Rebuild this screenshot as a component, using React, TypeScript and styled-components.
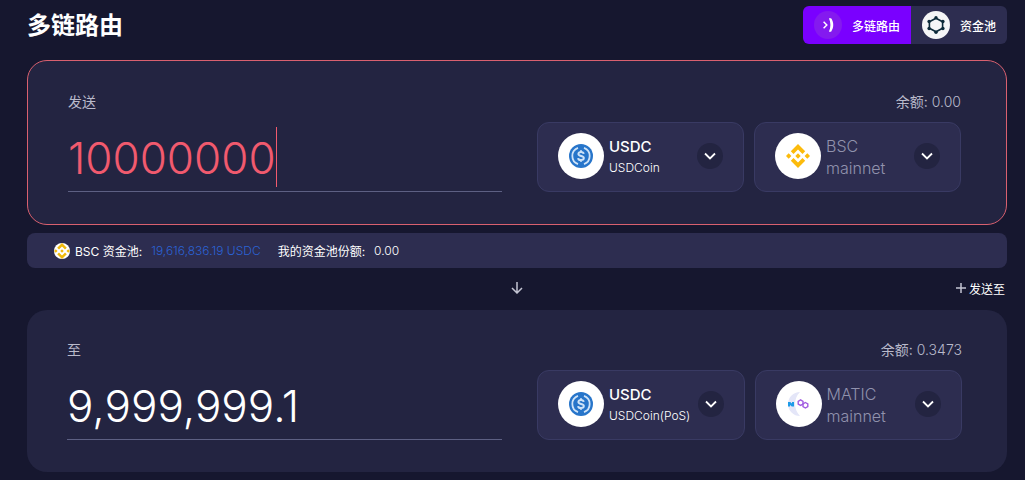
import React, { useState } from 'react';
import styled, { createGlobalStyle } from 'styled-components';

const GlobalStyle = createGlobalStyle`
  *, *::before, *::after { box-sizing: border-box; }
  body {
    margin: 0;
    background: #16172f;
    color: #fff;
    font-family: Inter, 'Noto Sans CJK SC', sans-serif;
  }
  button, input { font-family: inherit; color: inherit; }
  button { border: 0; padding: 0; margin: 0; background: none; cursor: pointer; }
`;

const Page = styled.main`
  padding: 6px 18px 8px 27px;
`;

const Header = styled.header`
  display: flex;
  align-items: center;
  justify-content: space-between;
  height: 38px;
  margin-bottom: 16px;
`;

const Title = styled.h1`
  margin: 0;
  padding-top: 2px;
  font-size: 24px;
  line-height: 38px;
  font-weight: 600;
`;

const Tabs = styled.nav`
  display: flex;
  border-radius: 6px;
  overflow: hidden;
`;

const Tab = styled.button<{ $active?: boolean }>`
  display: flex;
  align-items: center;
  gap: 10px;
  height: 38px;
  padding: 0 11px;
  font-size: 12px;
  font-weight: 500;
  background: ${(p) => (p.$active ? '#7a00ff' : '#2d2d50')};
`;

const Card = styled.section<{ $invalid?: boolean }>`
  padding: ${(p) => (p.$invalid ? 31 : 30)}px 45px 32px 40px;
  border: ${(p) => (p.$invalid ? '1px solid #d9606f' : '0')};
  border-radius: 20px;
  background: #232441;
`;

const CardHead = styled.div`
  display: flex;
  justify-content: space-between;
  margin-bottom: 10px;
  font-size: 14px;
  line-height: 20px;
  color: #b9bacb;
`;

const BalanceValue = styled.span`
  font-weight: 300;
`;

const CardBody = styled.div`
  display: grid;
  grid-template-columns: 434fr 424fr;
  gap: 35px;
`;

const AmountLine = styled.div`
  display: flex;
  align-items: center;
  height: 70px;
  border-bottom: 1px solid #5d6083;
`;

const Amount = styled.input<{ $invalid?: boolean }>`
  field-sizing: content;
  min-width: 10px;
  max-width: 100%;
  height: 60px;
  padding: 3px 0 0;
  border: 0;
  outline: 0;
  background: none;
  caret-color: transparent;
  font-size: 44px;
  font-weight: 300;
  color: ${(p) => (p.$invalid ? '#f15a6e' : '#fff')};
`;

const Caret = styled.span`
  width: 1px;
  height: 60px;
  background: #f15a6e;
`;

const Pickers = styled.div`
  display: grid;
  grid-template-columns: 1fr 1fr;
  gap: 10px;
`;

const Picker = styled.button`
  display: flex;
  align-items: center;
  gap: 5px;
  height: 70px;
  padding: 0 20px 2px;
  border: 1px solid #393a63;
  border-radius: 12px;
  background: #2d2d50;
  text-align: left;
`;

const PickerText = styled.span`
  flex: 1;
  min-width: 0;
  display: flex;
  flex-direction: column;
  padding-top: 2px;
`;

const TokenName = styled.span`
  font-size: 15px;
  line-height: 22px;
  font-weight: 500;
`;

const TokenNote = styled.span`
  font-size: 12px;
  line-height: 20px;
  font-weight: 300;
  white-space: nowrap;
`;

const ChainName = styled.span`
  font-size: 16px;
  line-height: 22px;
  font-weight: 300;
  color: #9192ad;
`;

const Disc = styled.span<{ $size: number; $color: string }>`
  flex: none;
  display: grid;
  place-items: center;
  width: ${(p) => p.$size}px;
  height: ${(p) => p.$size}px;
  border-radius: 50%;
  background: ${(p) => p.$color};
`;

const PoolBar = styled.div`
  display: flex;
  align-items: center;
  gap: 9px;
  height: 35px;
  margin-top: 8px;
  padding: 0 27px;
  border-radius: 8px;
  background: #2d2d50;
  font-size: 12px;
  font-weight: 400;
`;

const PoolItem = styled.span`
  display: flex;
  align-items: center;
  gap: 5px;
`;

const PoolValue = styled.span<{ $accent?: boolean }>`
  margin-right: 8px;
  font-weight: 300;
  color: ${(p) => (p.$accent ? '#2b62d4' : '#fff')};
`;

const Between = styled.div`
  display: grid;
  grid-template-columns: 1fr auto 1fr;
  align-items: center;
  height: 42px;
  padding-bottom: 2px;
`;

const Swap = styled.button`
  grid-column: 2;
  display: flex;
`;

const AddRecipient = styled.button`
  justify-self: end;
  display: flex;
  align-items: center;
  gap: 2px;
  padding-right: 2px;
  font-size: 12px;
`;

const RouterIcon = () => (
  <svg width="28" height="28" viewBox="0 0 28 28" fill="none" stroke="#fff" aria-hidden="true">
    <path d="M9.600 10.800l3.200 3.200-3.200 3.200" strokeWidth="1.500" />
    <path d="M14.900 7.300h2.200c2.900 4 2.900 9.400 0 13.400h-2.200c2-4 2-9.400 0-13.400z" fill="#fff" stroke="none" />
  </svg>
);

const PoolIcon = () => (
  <svg width="28" height="28" viewBox="0 0 28 28" fill="#0d2a3a" aria-hidden="true">
    <path d="M14 7.200l6.600 3.500v6.600L14 20.800l-6.600-3.500v-6.600z" fill="none" stroke="#0d2a3a" strokeWidth="1.600" />
    <circle cx="14" cy="6.800" r="1.700" />
    <circle cx="20.900" cy="10.500" r="1.700" />
    <circle cx="20.900" cy="17.500" r="1.700" />
    <circle cx="14" cy="21.200" r="1.700" />
    <circle cx="7.100" cy="17.500" r="1.700" />
    <circle cx="7.100" cy="10.500" r="1.700" />
  </svg>
);

const UsdcIcon = () => (
  <svg width="24" height="24" viewBox="0 0 32 32" aria-hidden="true">
    <circle cx="16" cy="16" r="16" fill="#2775ca" />
    <g fill="none" stroke="#cfe3f8" strokeWidth="2.400">
      <path d="M12 5.200a11.500 11.500 0 0 0 0 21.600M20 5.200a11.500 11.500 0 0 1 0 21.600" />
      <path d="M19.600 13.200c-.3-1.800-1.700-2.600-3.600-2.600-2.100 0-3.500 1-3.500 2.600 0 3.800 7.300 1.700 7.300 5.500 0 1.700-1.500 2.700-3.800 2.700-2.200 0-3.700-1-3.900-2.700M16 8.200v2.400M16 21.400v2.400" strokeWidth="2.600" />
    </g>
  </svg>
);

const BnbIcon = ({ size, color }: { size: number; color: string }) => (
  <svg width={size} height={size} viewBox="0 0 24 24" fill={color} aria-hidden="true">
    <path d="M12 0l7.200 7.200-2.700 2.700L12 5.400 7.500 9.900 4.800 7.200z" />
    <path d="M12 24l-7.200-7.200 2.700-2.700 4.500 4.500 4.500-4.500 2.700 2.700z" />
    <path d="M2.700 9.300L5.400 12l-2.700 2.700L0 12zM21.300 9.300L24 12l-2.700 2.700-2.700-2.700zM12 9.300l2.700 2.700-2.700 2.700L9.300 12z" />
  </svg>
);

const MaticIcon = () => (
  <svg width="24" height="24" viewBox="0 0 24 24" fill="none" aria-hidden="true">
    <path d="M13 0a12 12 0 0 0 0 24a17 17 0 0 1 0-24z" fill="#e4e6f8" />
    <path d="M1 10h2.200l1.800 1.600V10h2v4.600H4.800L3 13v1.600H1z" fill="#1e9be8" />
    <g stroke="#a15be0" strokeWidth="1.400">
      <path d="M13.600 7.900l2.400 1.400v2.700l-2.400 1.400-2.400-1.400V9.300z" />
      <path d="M18.400 10.500l2.400 1.400v2.700L18.400 16 16 14.600v-2.700z" />
    </g>
  </svg>
);

const ChevronIcon = () => (
  <svg width="12" height="8" viewBox="0 0 12 8" fill="none" stroke="#fff" strokeWidth="1.800" aria-hidden="true">
    <path d="M1 1.500l5 5 5-5" />
  </svg>
);

const ArrowDownIcon = () => (
  <svg width="12" height="12" viewBox="0 0 12 12" fill="none" stroke="#c4c5d3" strokeWidth="1.500" aria-hidden="true">
    <path d="M6 0v11M1 6l5 5 5-5" />
  </svg>
);

const PlusIcon = () => (
  <svg width="12" height="12" viewBox="0 0 12 12" fill="none" stroke="#c4c5d3" strokeWidth="1.500" aria-hidden="true">
    <path d="M6 1v10M1 6h10" />
  </svg>
);

interface SideProps {
  id: string;
  label: string;
  balance: string;
  initial: string;
  invalid?: boolean;
  tokenNote: string;
  chain: string;
  chainIcon: React.ReactNode;
}

const Side = ({ id, label, balance, initial, invalid, tokenNote, chain, chainIcon }: SideProps) => {
  const [amount, setAmount] = useState(initial);
  return (
    <Card $invalid={invalid}>
      <CardHead>
        <label htmlFor={id}>{label}</label>
        <span>余额: <BalanceValue>{balance}</BalanceValue></span>
      </CardHead>
      <CardBody>
        <AmountLine>
          <Amount
            id={id}
            $invalid={invalid}
            inputMode="decimal"
            value={amount}
            onChange={(e) => setAmount(e.target.value)}
          />
          {invalid && <Caret />}
        </AmountLine>
        <Pickers>
          <Picker type="button">
            <Disc $size={46} $color="#fff"><UsdcIcon /></Disc>
            <PickerText>
              <TokenName>USDC</TokenName>
              <TokenNote>{tokenNote}</TokenNote>
            </PickerText>
            <Disc $size={26} $color="#232441"><ChevronIcon /></Disc>
          </Picker>
          <Picker type="button">
            <Disc $size={46} $color="#fff">{chainIcon}</Disc>
            <PickerText>
              <ChainName>{chain}</ChainName>
              <ChainName>mainnet</ChainName>
            </PickerText>
            <Disc $size={26} $color="#232441"><ChevronIcon /></Disc>
          </Picker>
        </Pickers>
      </CardBody>
    </Card>
  );
};

export default function App() {
  return (
    <>
      <GlobalStyle />
      <Page>
        <Header>
          <Title>多链路由</Title>
          <Tabs>
            <Tab type="button" $active>
              <Disc $size={28} $color="#841aef"><RouterIcon /></Disc>
              多链路由
            </Tab>
            <Tab type="button">
              <Disc $size={28} $color="#f5f5f7"><PoolIcon /></Disc>
              资金池
            </Tab>
          </Tabs>
        </Header>
        <Side
          id="send"
          label="发送"
          balance="0.00"
          initial="10000000"
          invalid
          tokenNote="USDCoin"
          chain="BSC"
          chainIcon={<BnbIcon size={24} color="#fcbb0c" />}
        />
        <PoolBar>
          <PoolItem>
            <Disc $size={16} $color="#fff"><BnbIcon size={16} color="#f0b90b" /></Disc>
            BSC 资金池:
          </PoolItem>
          <PoolValue $accent>19,616,836.19 USDC</PoolValue>
          <PoolItem>我的资金池份额:</PoolItem>
          <PoolValue>0.00</PoolValue>
        </PoolBar>
        <Between>
          <Swap type="button" aria-label="↓"><ArrowDownIcon /></Swap>
          <AddRecipient type="button"><PlusIcon />发送至</AddRecipient>
        </Between>
        <Side
          id="receive"
          label="至"
          balance="0.3473"
          initial="9,999,999.1"
          tokenNote="USDCoin(PoS)"
          chain="MATIC"
          chainIcon={<MaticIcon />}
        />
      </Page>
    </>
  );
}
